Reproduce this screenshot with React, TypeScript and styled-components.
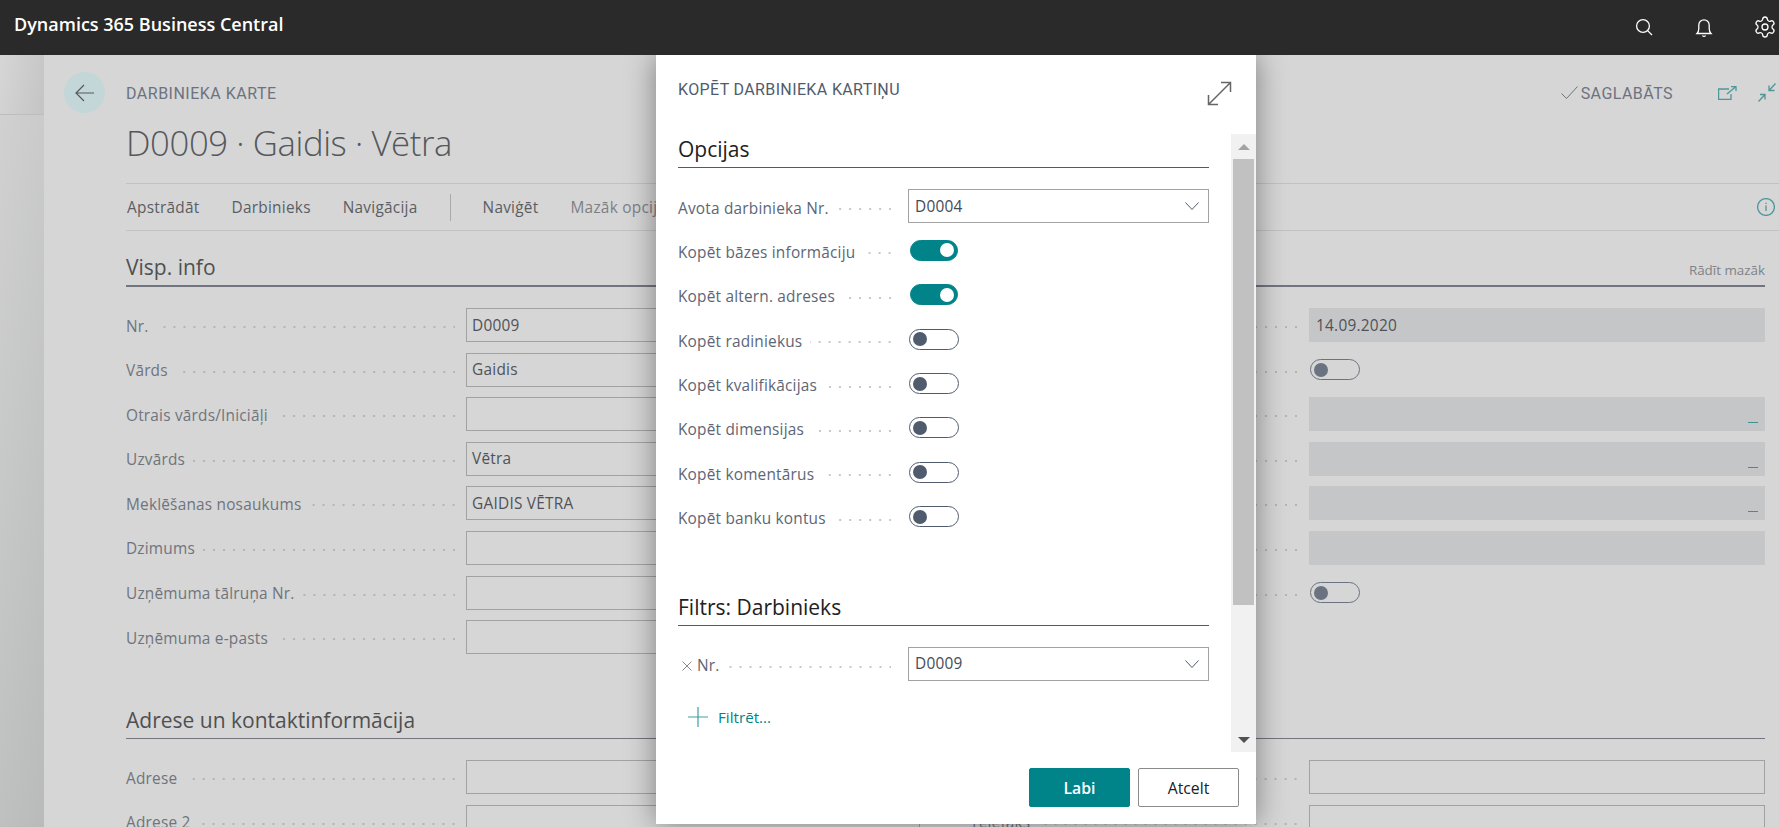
import React from "react";
import styled, { createGlobalStyle } from "styled-components";
import { Settings } from "lucide-react";

const uiFont = `"Open Sans", "Noto Sans", sans-serif`;
const dinFont = `Roboto, "Liberation Sans", sans-serif`;

const GlobalStyle = createGlobalStyle`
  html, body { margin: 0; padding: 0; }
  body { font-family: ${uiFont}; background: #d6d6d6; }
  * { box-sizing: border-box; }
`;

const Page = styled.div`
  position: relative;
  display: flex;
  flex-direction: column;
  width: 1779px;
  height: 827px;
  overflow: hidden;
  background: #d6d6d6;
`;

const TopBar = styled.header`
  position: relative;
  z-index: 3;
  flex: 0 0 55px;
  display: flex;
  align-items: flex-start;
  justify-content: space-between;
  padding: 13px 2px 0 14px;
  background: #2a2a2a;
`;

const Brand = styled.div`
  color: #fff;
  font-size: 18px;
  line-height: 22px;
  font-weight: 600;
`;

const TopIcons = styled.div`
  display: flex;
  align-items: center;
  gap: 38px;
  margin-top: 2px;
`;

const TopIcon = styled.svg`
  display: block;
  width: 22px;
  height: 22px;
  fill: none;
  stroke: #fff;
  stroke-width: 1.3;
`;

const Shell = styled.div`
  flex: 1;
  display: flex;
  min-height: 0;
`;

const SideStrip = styled.div`
  flex: 0 0 44px;
  background: linear-gradient(100deg, #d2d2d2 0%, #b9baba 100%);
`;

const SideStripTop = styled.div`
  height: 60px;
  border-bottom: 1px solid #bdbdbd;
  background: linear-gradient(100deg, #d6d6d6 0%, #c4c4c4 100%);
`;

const Card = styled.main`
  flex: 1;
  min-width: 0;
  padding: 17px 0 0 20px;
`;

const HeadRow = styled.div`
  display: flex;
  align-items: center;
  gap: 21px;
  height: 41px;
`;

const BackButton = styled.div`
  flex: 0 0 41px;
  height: 41px;
  display: flex;
  align-items: center;
  justify-content: center;
  border-radius: 50%;
  background: #c3d6d8;
`;

const Caption = styled.div`
  padding-top: 2px;
  font-family: ${dinFont};
  font-size: 16px;
  letter-spacing: 0.5px;
  color: #6d7280;
  text-transform: uppercase;
`;

const SavedGroup = styled.div`
  margin-left: auto;
  display: flex;
  align-items: center;
  height: 41px;
  padding-right: 3px;
`;

const SavedText = styled(Caption)`
  margin: 0 45px 0 3px;
  letter-spacing: 0.45px;
`;

const TealIcon = styled.svg`
  display: block;
  fill: none;
  stroke: #4f9698;
  stroke-width: 1.3;
`;

const Body = styled.div`
  margin-left: 62px;
`;

const RecordTitle = styled.h1`
  margin: 8px 0 0;
  height: 48px;
  font-size: 34.7px;
  line-height: 44px;
  font-weight: 300;
  letter-spacing: -0.4px;
  color: #55585c;
`;

const ActionBar = styled.nav`
  display: flex;
  align-items: center;
  gap: 32px;
  height: 48px;
  margin-top: 14px;
  padding-left: 1px;
  border-top: 1px solid #c2c2c2;
  border-bottom: 1px solid #c2c2c2;
`;

const ActionItem = styled.span<{ $muted?: boolean }>`
  font-size: 15.4px;
  letter-spacing: 0.25px;
  color: ${({ $muted }) => ($muted ? "#7d8086" : "#5b5e64")};
`;

const ActionDivider = styled.span`
  width: 1px;
  height: 27px;
  background: #a9a9a9;
`;

const InfoSlot = styled.div`
  margin-left: auto;
  padding-right: 4px;
`;

const Sections = styled.div`
  padding-right: 14px;
`;

const SectionHead = styled.div<{ $thin?: boolean }>`
  display: flex;
  align-items: flex-end;
  justify-content: space-between;
  height: ${({ $thin }) => ($thin ? "34px" : "56px")};
  padding-bottom: 4px;
  border-bottom: ${({ $thin }) => ($thin ? "1px" : "2px")} solid #72747f;
`;

const SectionTitle = styled.h2`
  margin: 0;
  font-size: 21px;
  line-height: 28px;
  font-weight: 500;
  color: #4f5052;
`;

const ShowLess = styled.span`
  font-size: 13.4px;
  line-height: 22px;
  color: #7f8288;
`;

const FormGrid = styled.div`
  display: grid;
  grid-template-columns: 794px 795px;
  column-gap: 50px;
  padding-top: 21px;
`;

const FormColumn = styled.div`
  display: flex;
  flex-direction: column;
  gap: 10.6px;
`;

const Row = styled.div<{ $label: number }>`
  display: grid;
  grid-template-columns: ${({ $label }) => $label}px 1fr;
  align-items: center;
  height: 34px;
`;

const LabelCell = styled.div<{ $end: number }>`
  display: flex;
  align-items: center;
  min-width: 0;
  padding-top: 2px;
  padding-right: ${({ $end }) => $end}px;
  font-size: 15.4px;
  letter-spacing: 0.2px;
  color: #6f747d;
  white-space: nowrap;
`;

const Leader = styled.span<{ $dot?: string }>`
  flex: 1;
  height: 2px;
  margin: 2px 0 0 8px;
  background-image: radial-gradient(circle, ${({ $dot }) => $dot ?? "#b4b4b4"} 0.9px, transparent 1.1px);
  background-size: 10px 2px;
  background-position: right -4px center;
  background-repeat: repeat-x;
`;

const Input = styled.div<{ $readOnly?: boolean }>`
  position: relative;
  display: flex;
  align-items: center;
  height: 34px;
  padding-left: ${({ $readOnly }) => ($readOnly ? "6px" : "5px")};
  border: 1px solid ${({ $readOnly }) => ($readOnly ? "#c5c6c8" : "#a2a2a2")};
  background: ${({ $readOnly }) => ($readOnly ? "#c5c6c8" : "transparent")};
  font-size: 15.4px;
  letter-spacing: 0.25px;
  color: #505257;
`;

const DrillMark = styled.span`
  position: absolute;
  right: 6px;
  bottom: 7px;
  width: 10px;
  height: 1px;
  background: #3f8f93;
`;

const Toggle = styled.span<{ $on?: boolean; $tone: string }>`
  display: flex;
  align-items: center;
  justify-content: ${({ $on }) => ($on ? "flex-end" : "flex-start")};
  width: ${({ $on }) => ($on ? "48px" : "50px")};
  height: 21px;
  margin-left: ${({ $on }) => ($on ? "2px" : "1px")};
  padding: 0 3px;
  border-radius: 11px;
  border: 1px solid ${({ $tone }) => $tone};
  background: ${({ $on, $tone }) => ($on ? $tone : "transparent")};

  &::after {
    content: "";
    width: 14px;
    height: 14px;
    border-radius: 50%;
    background: ${({ $on, $tone }) => ($on ? "#fff" : $tone)};
  }
`;

const SecondSection = styled.div`
  margin-top: 51px;
`;

const Modal = styled.section`
  position: absolute;
  z-index: 2;
  left: 656px;
  top: 55px;
  display: flex;
  flex-direction: column;
  width: 600px;
  height: 769px;
  background: #fff;
  box-shadow: 0 0 28px rgba(0, 0, 0, 0.42);
`;

const ModalHeader = styled.div`
  flex: 0 0 79px;
  display: flex;
  align-items: flex-start;
  justify-content: space-between;
  padding: 23px 24px 0 22px;
`;

const ModalTitle = styled(Caption)`
  color: #505c6d;
  letter-spacing: 0.37px;
  line-height: 20px;
`;

const ExpandIcon = styled.svg`
  display: block;
  margin-top: 3px;
  fill: none;
  stroke: #666;
  stroke-width: 1.5;
`;

const ModalMain = styled.div`
  flex: 0 0 618px;
  display: flex;
  min-height: 0;
`;

const ModalContent = styled.div`
  flex: 1;
  min-width: 0;
  padding: 0 22px;
`;

const DarkHead = styled(SectionHead)`
  border-bottom-color: #505c6d;
`;

const DarkTitle = styled(SectionTitle)`
  color: #212121;
`;

const ModalRows = styled.div`
  display: flex;
  flex-direction: column;
  gap: 10.4px;
  padding-top: 21px;
`;

const ModalLabel = styled(LabelCell)`
  padding-top: 4px;
  color: #5d6675;
`;

const Select = styled(Input)`
  justify-content: space-between;
  padding-left: 6px;
  padding-right: 9px;
  color: #444b57;
`;

const ClearMark = styled.svg`
  flex: 0 0 auto;
  margin: 0 5px 0 4px;
  fill: none;
  stroke: #8a8a8a;
  stroke-width: 1;
`;

const FilterSection = styled.div`
  margin-top: 58px;
`;

const AddFilter = styled.div`
  display: flex;
  align-items: center;
  gap: 10px;
  height: 24px;
  margin: 24px 0 0 10px;
  font-size: 15.2px;
  color: #008489;
`;

const Scrollbar = styled.div`
  flex: 0 0 25px;
  display: flex;
  flex-direction: column;
  align-items: center;
  padding: 0 2px;
  background: #f1f1f1;
`;

const ScrollCap = styled.div`
  flex: 0 0 25px;
  display: flex;
  align-items: center;
  justify-content: center;
`;

const Arrow = styled.span<{ $down?: boolean }>`
  width: 0;
  height: 0;
  border-left: 6px solid transparent;
  border-right: 6px solid transparent;
  ${({ $down }) => ($down ? "border-top: 6px solid #505050;" : "border-bottom: 6px solid #a3a3a3;")}
`;

const ScrollThumb = styled.div`
  align-self: stretch;
  flex: 0 0 446px;
  background: #c1c1c1;
`;

const ScrollRest = styled.div`
  flex: 1;
`;

const ModalFooter = styled.div`
  flex: 0 0 72px;
  display: flex;
  justify-content: flex-end;
  gap: 8px;
  padding: 16px 17px 0 0;
`;

const Button = styled.div<{ $primary?: boolean }>`
  display: flex;
  align-items: center;
  justify-content: center;
  width: 101px;
  height: 39px;
  border-radius: 2px;
  border: 1px solid ${({ $primary }) => ($primary ? "#008489" : "#8a8a8a")};
  background: ${({ $primary }) => ($primary ? "#008489" : "#fff")};
  color: ${({ $primary }) => ($primary ? "#fff" : "#212121")};
  font-size: 15.8px;
  font-weight: ${({ $primary }) => ($primary ? 600 : 400)};
`;

const Chevron = () => (
  <svg width="14" height="8" viewBox="0 0 14 8" fill="none" stroke="#505c6d" strokeWidth="1">
    <path d="M.5.5 7 7.5 13.5.5" />
  </svg>
);

type LeftField = { label: string; value?: string };
type RightField = { value?: string; kind?: "toggle" | "drill" | "plain" };

const generalLeft: LeftField[] = [
  { label: "Nr.", value: "D0009" },
  { label: "Vārds", value: "Gaidis" },
  { label: "Otrais vārds/Iniciāļi" },
  { label: "Uzvārds", value: "Vētra" },
  { label: "Meklēšanas nosaukums", value: "GAIDIS VĒTRA" },
  { label: "Dzimums" },
  { label: "Uzņēmuma tālruņa Nr." },
  { label: "Uzņēmuma e-pasts" },
];

const generalRight: RightField[] = [
  { value: "14.09.2020" },
  { kind: "toggle" },
  { kind: "drill" },
  { kind: "drill" },
  { kind: "drill" },
  { kind: "plain" },
  { kind: "toggle" },
];

const copyOptions = [
  { label: "Kopēt bāzes informāciju", on: true },
  { label: "Kopēt altern. adreses", on: true },
  { label: "Kopēt radiniekus" },
  { label: "Kopēt kvalifikācijas" },
  { label: "Kopēt dimensijas" },
  { label: "Kopēt komentārus" },
  { label: "Kopēt banku kontus" },
];

export default function App() {
  return (
    <Page>
      <GlobalStyle />
      <TopBar>
        <Brand>Dynamics 365 Business Central</Brand>
        <TopIcons>
          <TopIcon viewBox="0 0 22 22">
            <circle cx="10" cy="10" r="6.4" />
            <path d="m14.6 14.6 4.4 4.4" />
          </TopIcon>
          <TopIcon viewBox="0 0 22 22">
            <path d="M4 17.5h14c-1.4-1.4-1.8-2.6-1.8-5V9a5.2 5.2 0 0 0-10.4 0v3.500c0 2.400-.4 3.600-1.800 5Z" />
            <path d="M9.500 19.500a1.700 1.700 0 0 0 3 0" />
          </TopIcon>
          <Settings size={24} color="#fff" strokeWidth={1.3} />
        </TopIcons>
      </TopBar>
      <Shell>
        <SideStrip>
          <SideStripTop />
        </SideStrip>
        <Card>
          <HeadRow>
            <BackButton>
              <svg width="20" height="18" viewBox="0 0 20 18" fill="none" stroke="#55585c" strokeWidth="1.2">
                <path d="M19 9H1M9 1 1 9l8 8" />
              </svg>
            </BackButton>
            <Caption>Darbinieka karte</Caption>
            <SavedGroup>
              <svg width="17" height="13" viewBox="0 0 17 13" fill="none" stroke="#6d7280" strokeWidth="1">
                <path d="m.5 7.500 5 5L16.500.5" />
              </svg>
              <SavedText>Saglabāts</SavedText>
              <TealIcon width="19" height="14" viewBox="0 0 19 14">
                <path d="M11 3H.6v10.400H13V8M9 8l9-7.400M13 .6h5V5" />
              </TealIcon>
              <TealIcon width="18" height="19" viewBox="0 0 18 19" style={{ marginLeft: 21 }}>
                <path d="m17.500.5-6.500 7M11 2.500v5h5.500M.5 18.500l6.500-7M2 11.500h5v5" />
              </TealIcon>
            </SavedGroup>
          </HeadRow>
          <Body>
            <RecordTitle>D0009 · Gaidis · Vētra</RecordTitle>
            <ActionBar>
              <ActionItem>Apstrādāt</ActionItem>
              <ActionItem>Darbinieks</ActionItem>
              <ActionItem>Navigācija</ActionItem>
              <ActionDivider />
              <ActionItem>Naviģēt</ActionItem>
              <ActionItem $muted>Mazāk opcijas</ActionItem>
              <InfoSlot>
                <TealIcon width="18" height="18" viewBox="0 0 18 18">
                  <circle cx="9" cy="9" r="8.400" />
                  <path d="M9 7.500V13M9 4.800v1.200" />
                </TealIcon>
              </InfoSlot>
            </ActionBar>
            <Sections>
              <SectionHead>
                <SectionTitle>Visp. info</SectionTitle>
                <ShowLess>Rādīt mazāk</ShowLess>
              </SectionHead>
              <FormGrid>
                <FormColumn>
                  {generalLeft.map((field) => (
                    <Row $label={340} key={field.label}>
                      <LabelCell $end={11}>
                        {field.label}
                        <Leader />
                      </LabelCell>
                      <Input>{field.value}</Input>
                    </Row>
                  ))}
                </FormColumn>
                <FormColumn>
                  {generalRight.map((field, i) => (
                    <Row $label={339} key={i}>
                      <LabelCell $end={12}>
                        <Leader />
                      </LabelCell>
                      {field.kind === "toggle" ? (
                        <Toggle $tone="#6b7380" />
                      ) : (
                        <Input $readOnly>
                          {field.value}
                          {field.kind === "drill" && <DrillMark />}
                        </Input>
                      )}
                    </Row>
                  ))}
                </FormColumn>
              </FormGrid>
              <SecondSection>
                <SectionHead $thin>
                  <SectionTitle>Adrese un kontaktinformācija</SectionTitle>
                </SectionHead>
                <FormGrid>
                  <FormColumn>
                    {["Adrese", "Adrese 2"].map((label) => (
                      <Row $label={340} key={label}>
                        <LabelCell $end={11}>
                          {label}
                          <Leader />
                        </LabelCell>
                        <Input />
                      </Row>
                    ))}
                  </FormColumn>
                  <FormColumn>
                    {["Pilsēta", "Telefaks"].map((label) => (
                      <Row $label={339} key={label}>
                        <LabelCell $end={12}>
                          {label}
                          <Leader />
                        </LabelCell>
                        <Input />
                      </Row>
                    ))}
                  </FormColumn>
                </FormGrid>
              </SecondSection>
            </Sections>
          </Body>
        </Card>
      </Shell>

      <Modal>
        <ModalHeader>
          <ModalTitle>Kopēt darbinieka kartiņu</ModalTitle>
          <ExpandIcon width="25" height="25" viewBox="0 0 25 25">
            <path d="M1.500 23.500 23.500 1.500M14 1.500h9.500V11M1.500 14v9.500H11" />
          </ExpandIcon>
        </ModalHeader>
        <ModalMain>
          <ModalContent>
            <DarkHead $thin>
              <DarkTitle>Opcijas</DarkTitle>
            </DarkHead>
            <ModalRows>
              <Row $label={230}>
                <ModalLabel $end={17}>
                  Avota darbinieka Nr.
                  <Leader $dot="#c8c8c8" />
                </ModalLabel>
                <Select>
                  D0004
                  <Chevron />
                </Select>
              </Row>
              {copyOptions.map((option) => (
                <Row $label={230} key={option.label}>
                  <ModalLabel $end={17}>
                    {option.label}
                    <Leader $dot="#c8c8c8" />
                  </ModalLabel>
                  <Toggle $on={option.on} $tone={option.on ? "#008489" : "#505c6d"} />
                </Row>
              ))}
            </ModalRows>
            <FilterSection>
              <DarkHead $thin>
                <DarkTitle>Filtrs: Darbinieks</DarkTitle>
              </DarkHead>
              <ModalRows>
                <Row $label={230}>
                  <ModalLabel $end={17}>
                    <ClearMark width="10" height="10" viewBox="0 0 10 10">
                      <path d="m.5.500 9 9M9.500.500l-9 9" />
                    </ClearMark>
                    Nr.
                    <Leader $dot="#c8c8c8" />
                  </ModalLabel>
                  <Select>
                    D0009
                    <Chevron />
                  </Select>
                </Row>
              </ModalRows>
              <AddFilter>
                <svg width="20" height="20" viewBox="0 0 20 20" fill="none" stroke="#3f9fa3" strokeWidth="1.2">
                  <path d="M10 0v20M0 10h20" />
                </svg>
                Filtrēt...
              </AddFilter>
            </FilterSection>
          </ModalContent>
          <Scrollbar>
            <ScrollCap>
              <Arrow />
            </ScrollCap>
            <ScrollThumb />
            <ScrollRest />
            <ScrollCap>
              <Arrow $down />
            </ScrollCap>
          </Scrollbar>
        </ModalMain>
        <ModalFooter>
          <Button $primary>Labi</Button>
          <Button>Atcelt</Button>
        </ModalFooter>
      </Modal>
    </Page>
  );
}
